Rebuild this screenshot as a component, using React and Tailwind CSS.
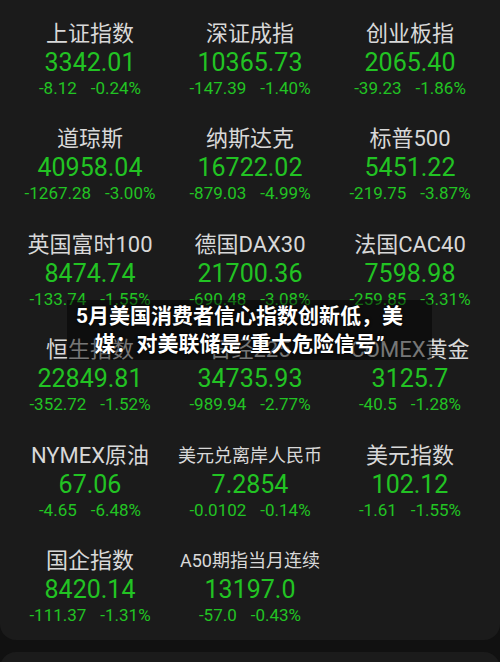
import React from "react";

const rows = [
  [
    ["上证指数", "3342.01", "-8.12", "-0.24%"],
    ["深证成指", "10365.73", "-147.39", "-1.40%"],
    ["创业板指", "2065.40", "-39.23", "-1.86%"],
  ],
  [
    ["道琼斯", "40958.04", "-1267.28", "-3.00%"],
    ["纳斯达克", "16722.02", "-879.03", "-4.99%"],
    ["标普500", "5451.22", "-219.75", "-3.87%"],
  ],
  [
    ["英国富时100", "8474.74", "-133.74", "-1.55%"],
    ["德国DAX30", "21700.36", "-690.48", "-3.08%"],
    ["法国CAC40", "7598.98", "-259.85", "-3.31%"],
  ],
  [
    ["恒生指数", "22849.81", "-352.72", "-1.52%"],
    ["日经225", "34735.93", "-989.94", "-2.77%"],
    ["COMEX黄金", "3125.7", "-40.5", "-1.28%"],
  ],
  [
    ["NYMEX原油", "67.06", "-4.65", "-6.48%"],
    ["美元兑离岸人民币", "7.2854", "-0.0102", "-0.14%", true],
    ["美元指数", "102.12", "-1.61", "-1.55%"],
  ],
  [
    ["国企指数", "8420.14", "-111.37", "-1.31%"],
    ["A50期指当月连续", "13197.0", "-57.0", "-0.43%", true],
  ],
];

function Cell({ name, price, chg, pct, small }) {
  return (
    <div className="flex h-[105.6px] flex-col items-center pt-[19px]">
      <div
        className={
          "flex h-[28px] items-center whitespace-nowrap text-[#d8d8d8] " +
          (small ? "text-[18px]" : "text-[22px]")
        }
      >
        {name}
      </div>
      <div className="flex h-[30px] items-center text-[25px] leading-none text-[#22c323]">
        {price}
      </div>
      <div className="flex h-[22px] items-center gap-[14px] whitespace-nowrap text-[17px] leading-none text-[#22c323]">
        <span>{chg}</span>
        <span>{pct}</span>
      </div>
    </div>
  );
}

export default function App() {
  return (
    <div
      className="relative h-[662px] w-[500px] overflow-hidden bg-[#111111]"
      style={{ fontFamily: 'Roboto, "Noto Sans CJK SC", sans-serif' }}
    >
      <div className="rounded-b-[16px] bg-[#1b1b1b] px-[10px] pb-[6px]">
        <div className="grid grid-cols-3">
          {rows.flat().map((c, i) => (
            <Cell
              key={i}
              name={c[0]}
              price={c[1]}
              chg={c[2]}
              pct={c[3]}
              small={c[4]}
            />
          ))}
        </div>
      </div>
      <div className="mt-[12px] h-[40px] rounded-t-[16px] bg-[#1b1b1b]" />

      <div className="absolute left-[67px] top-[300px] h-[60px] w-[365px] bg-black/45 pr-[20px]">
        <div className="flex h-full flex-col items-center justify-center text-center text-[21px] font-bold leading-[28px] text-white [text-shadow:0_0_3px_#000,0_0_1px_#000]">
          <div className="whitespace-nowrap">5月美国消费者信心指数创新低，美</div>
          <div className="whitespace-nowrap">媒：对美联储是“重大危险信号”</div>
        </div>
      </div>
    </div>
  );
}
